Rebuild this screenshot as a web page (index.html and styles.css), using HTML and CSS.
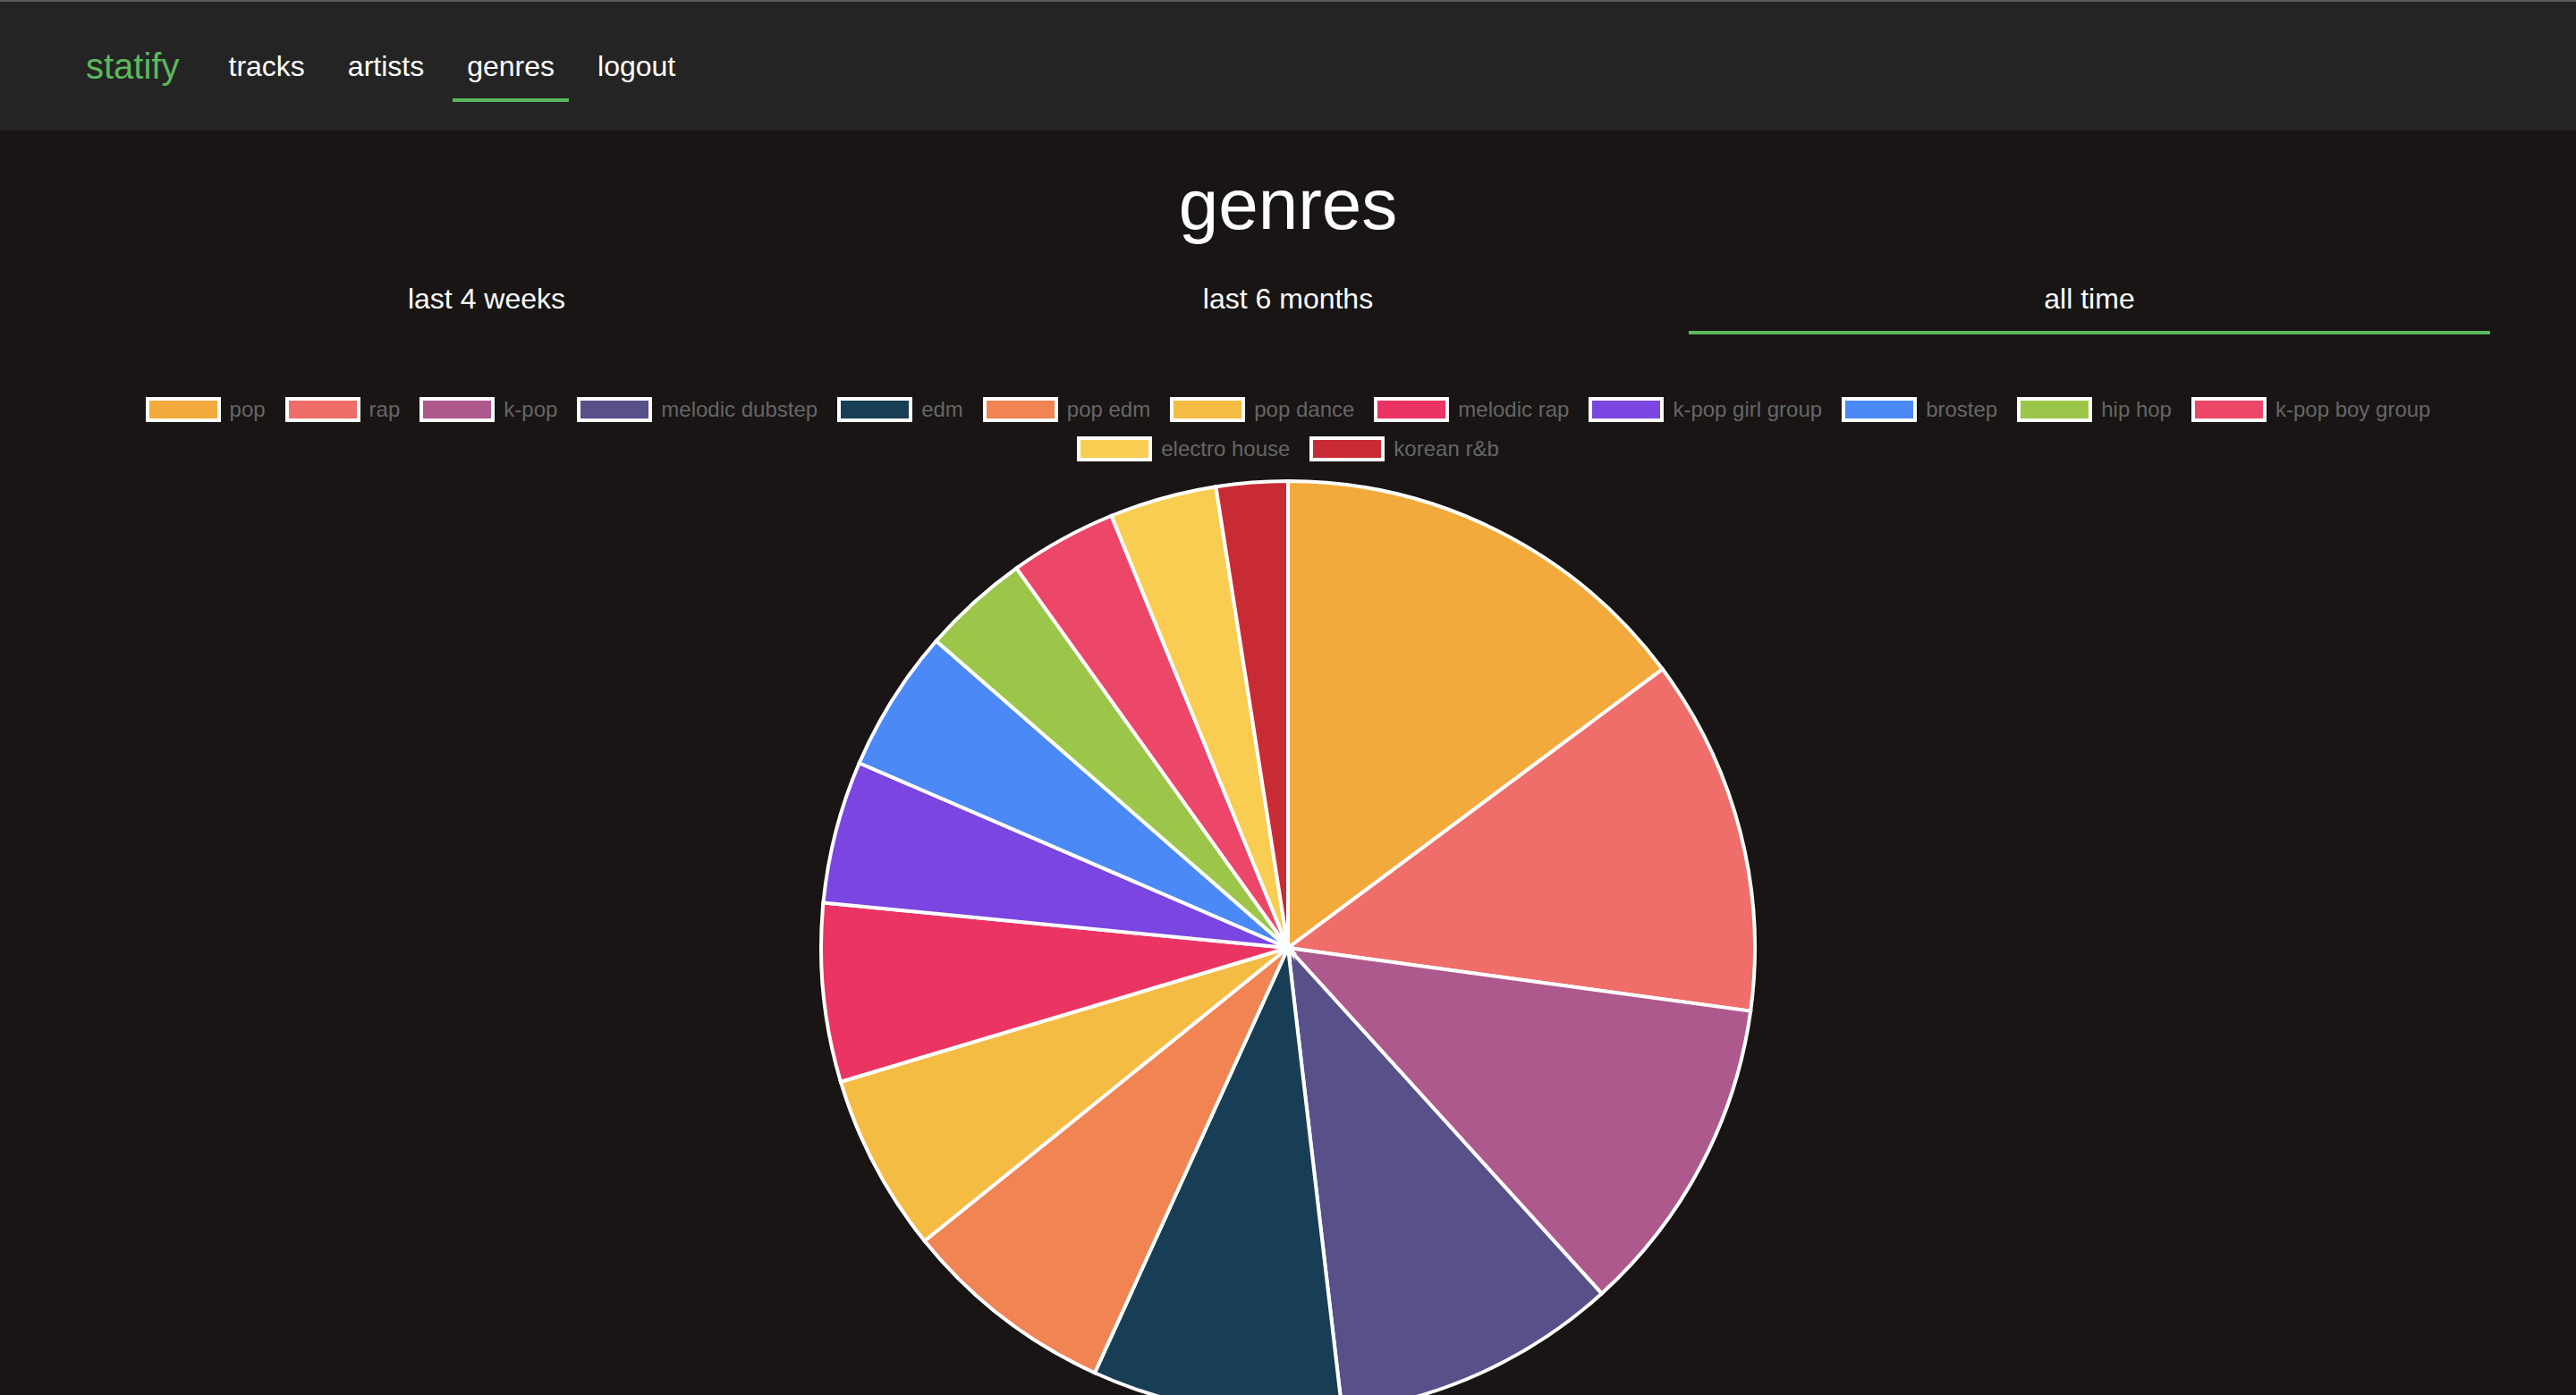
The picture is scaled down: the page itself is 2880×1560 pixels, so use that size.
FILE: index.html
```html
<!DOCTYPE html>
<html lang="en">
<head>
<meta charset="utf-8">
<title>statify - genres</title>
<link rel="stylesheet" href="styles.css">
</head>
<body>
<nav class="navbar">
  <a class="brand" href="#">statify</a>
  <ul class="nav-links">
    <li><a class="nav-link" href="#">tracks</a></li>
    <li><a class="nav-link" href="#">artists</a></li>
    <li><a class="nav-link active" href="#">genres</a></li>
    <li><a class="nav-link" href="#">logout</a></li>
  </ul>
</nav>
<main class="page">
  <h1 class="title">genres</h1>
  <div class="tabs">
    <a class="tab" href="#">last 4 weeks</a>
    <a class="tab" href="#">last 6 months</a>
    <a class="tab active" href="#">all time</a>
  </div>
  <div class="legend">
    <div class="legend-row">
      <div class="item"><span class="swatch c-pop"></span><span class="label">pop</span></div>
      <div class="item"><span class="swatch c-rap"></span><span class="label">rap</span></div>
      <div class="item"><span class="swatch c-kpop"></span><span class="label">k-pop</span></div>
      <div class="item"><span class="swatch c-md"></span><span class="label">melodic dubstep</span></div>
      <div class="item"><span class="swatch c-edm"></span><span class="label">edm</span></div>
      <div class="item"><span class="swatch c-popedm"></span><span class="label">pop edm</span></div>
      <div class="item"><span class="swatch c-popdance"></span><span class="label">pop dance</span></div>
      <div class="item"><span class="swatch c-melrap"></span><span class="label">melodic rap</span></div>
      <div class="item"><span class="swatch c-kgirl"></span><span class="label">k-pop girl group</span></div>
      <div class="item"><span class="swatch c-brostep"></span><span class="label">brostep</span></div>
      <div class="item"><span class="swatch c-hiphop"></span><span class="label">hip hop</span></div>
      <div class="item"><span class="swatch c-kboy"></span><span class="label">k-pop boy group</span></div>
    </div>
    <div class="legend-row">
      <div class="item"><span class="swatch c-electro"></span><span class="label">electro house</span></div>
      <div class="item"><span class="swatch c-korean"></span><span class="label">korean r&amp;b</span></div>
    </div>
  </div>
  <svg class="pie" width="1052" height="1052" viewBox="0 0 1052 1052" xmlns="http://www.w3.org/2000/svg">
    <g stroke="#ffffff" stroke-width="4" stroke-linejoin="miter" stroke-miterlimit="10">
      <path fill="#f2aa3c" d="M526 526 L526 4 A522 522 0 0 1 944.72 214.28 Z"/>
      <path fill="#ef6e69" d="M526 526 L944.72 214.28 A522 522 0 0 1 1043.20 596.64 Z"/>
      <path fill="#ae598d" d="M526 526 L1043.20 596.64 A522 522 0 0 1 876.79 912.56 Z"/>
      <path fill="#575089" d="M526 526 L876.79 912.56 A522 522 0 0 1 586.60 1044.47 Z"/>
      <path fill="#183e56" d="M526 526 L586.60 1044.47 A522 522 0 0 1 309.98 1001.23 Z"/>
      <path fill="#f08453" d="M526 526 L309.98 1001.23 A522 522 0 0 1 119.69 853.72 Z"/>
      <path fill="#f5bc44" d="M526 526 L119.69 853.72 A522 522 0 0 1 25.93 675.71 Z"/>
      <path fill="#eb3463" d="M526 526 L25.93 675.71 A522 522 0 0 1 6.45 475.47 Z"/>
      <path fill="#7a45e1" d="M526 526 L6.45 475.47 A522 522 0 0 1 46.68 319.24 Z"/>
      <path fill="#4a89f6" d="M526 526 L46.68 319.24 A522 522 0 0 1 132.70 182.77 Z"/>
      <path fill="#9cc64a" d="M526 526 L132.70 182.77 A522 522 0 0 1 222.45 101.31 Z"/>
      <path fill="#ec4668" d="M526 526 L222.45 101.31 A522 522 0 0 1 328.57 42.77 Z"/>
      <path fill="#f8cd52" d="M526 526 L328.57 42.77 A522 522 0 0 1 445.34 10.27 Z"/>
      <path fill="#c92b35" d="M526 526 L445.34 10.27 A522 522 0 0 1 526 4 Z"/>
    </g>
  </svg>
</main>
</body>
</html>
```
FILE: styles.css
```css
* {
  box-sizing: border-box;
}

html, body {
  margin: 0;
  padding: 0;
}

body {
  background: #181514;
  color: #ffffff;
  font-family: "Liberation Sans", Arial, Helvetica, sans-serif;
}

a {
  text-decoration: none;
  color: inherit;
}

.navbar {
  height: 146px;
  background: #242424;
  border-top: 2px solid #595959;
  display: flex;
  align-items: flex-start;
  padding: 36px 96px 0;
}

.brand {
  color: #5cb85c;
  font-size: 40px;
  line-height: 60px;
  margin-top: 6px;
  margin-right: 39px;
}

.nav-links {
  list-style: none;
  margin: 0;
  padding: 0;
  display: flex;
  gap: 16px;
}

.nav-link {
  display: block;
  font-size: 32px;
  line-height: 48px;
  padding: 12px 16px;
  border-bottom: 4px solid transparent;
  color: #ffffff;
}

.nav-link.active {
  border-bottom-color: #5cb85c;
}

.page {
  margin: 0 96px;
}

.title {
  margin: 35px 0 0;
  text-align: center;
  font-size: 80px;
  line-height: 96px;
  font-weight: 400;
}

.tabs {
  margin-top: 33px;
  display: grid;
  grid-template-columns: 1fr 1fr 1fr;
}

.tab {
  text-align: center;
  font-size: 32px;
  line-height: 48px;
  padding: 0 0 12px;
  border-bottom: 4px solid transparent;
}

.tab.active {
  border-bottom-color: #5cb85c;
}

.legend {
  margin-top: 70px;
  display: flex;
  flex-direction: column;
  gap: 16px;
}

.legend-row {
  display: flex;
  justify-content: center;
  gap: 22px;
}

.item {
  display: flex;
  align-items: center;
  height: 28px;
}

.swatch {
  display: block;
  width: 84px;
  height: 28px;
  border: 4px solid #ffffff;
}

.label {
  margin-left: 10px;
  font-size: 24px;
  line-height: 28px;
  color: #666666;
  white-space: nowrap;
}

.c-pop { background: #f2aa3c; }
.c-rap { background: #ef6e69; }
.c-kpop { background: #ae598d; }
.c-md { background: #575089; }
.c-edm { background: #183e56; }
.c-popedm { background: #f08453; }
.c-popdance { background: #f5bc44; }
.c-melrap { background: #eb3463; }
.c-kgirl { background: #7a45e1; }
.c-brostep { background: #4a89f6; }
.c-hiphop { background: #9cc64a; }
.c-kboy { background: #ec4668; }
.c-electro { background: #f8cd52; }
.c-korean { background: #c92b35; }

.pie {
  display: block;
  margin: 18px auto 0;
}
```
